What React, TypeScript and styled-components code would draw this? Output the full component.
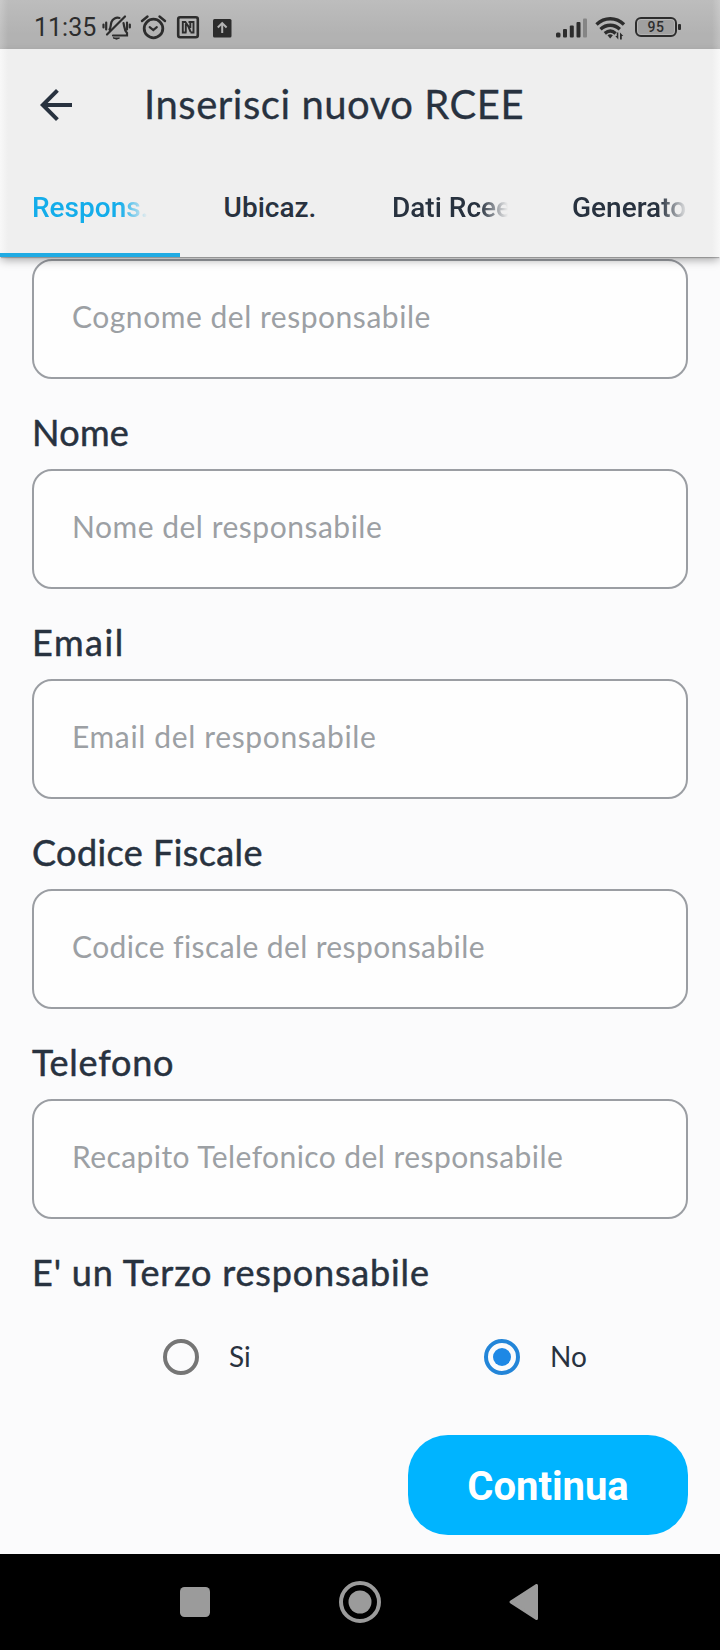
import React from 'react';
import styled, { createGlobalStyle } from 'styled-components';
import { MdArrowBack } from 'react-icons/md';

const GlobalStyle = createGlobalStyle`
  * { box-sizing: border-box; }
  body { margin: 0; background: #fbfbfb; }
`;

const Screen = styled.div`
  width: 720px;
  height: 1650px;
  display: flex;
  flex-direction: column;
  overflow: hidden;
  background: #fbfbfc;
  color: #28323f;
  font-family: Lato, 'Open Sans', sans-serif;
`;

const StatusBar = styled.div`
  height: 49px;
  flex: none;
  display: flex;
  align-items: center;
  justify-content: space-between;
  padding: 5px 38px 0 34px;
  background: linear-gradient(90deg, rgba(255, 255, 255, 0.2), transparent 8px, transparent 712px, rgba(255, 255, 255, 0.2)),
    linear-gradient(#bdbdbd, #b2b2b2 70%);
  color: #2d2d2d;
`;

const StatusGroup = styled.div`
  display: flex;
  align-items: center;
`;

const Clock = styled.span`
  width: 67px;
  padding-top: 1px;
  font: 400 25px/28px Roboto, sans-serif;
`;

const Header = styled.header`
  position: relative;
  z-index: 1;
  height: 208px;
  flex: none;
  display: flex;
  flex-direction: column;
  background: linear-gradient(90deg, #f8f8f8, #efefef 8px, #efefef 712px, #f8f8f8);
  box-shadow: 0 2px 1px -1px rgba(0, 0, 0, 0.22), 0 4px 9px -1px rgba(0, 0, 0, 0.34);
`;

const TitleBar = styled.div`
  height: 112px;
  display: flex;
  align-items: center;
  gap: 64px;
  padding-left: 32px;

  svg { flex: none; }
`;

const Title = styled.h1`
  margin: 0 0 3px;
  font-size: 40px;
  line-height: 48px;
  font-weight: 400;
  letter-spacing: 0.53px;
  white-space: nowrap;
  -webkit-text-stroke: 0.3px currentColor;
`;

const Tabs = styled.nav`
  flex: 1;
  display: grid;
  grid-template-columns: repeat(4, 1fr);
`;

const Tab = styled.div<{ $active?: boolean }>`
  display: flex;
  align-items: center;
  justify-content: center;
  padding: 0 32px;
  border-bottom: 4px solid ${(p) => (p.$active ? '#20abe3' : 'transparent')};
  color: ${(p) => (p.$active ? '#14adea' : '#28323f')};
`;

const TabText = styled.span<{ $faded?: boolean }>`
  ${(p) => p.$faded && 'width: 116px; mask-image: linear-gradient(90deg, #000 88px, transparent 116px);'}
  padding-top: 1px;
  overflow: hidden;
  white-space: nowrap;
  font: 500 28px/36px Roboto, sans-serif;
`;

const Form = styled.main`
  flex: 1;
  display: flex;
  flex-direction: column;
  padding: 2px 32px 0;
`;

const Label = styled.label<{ $tracking: number }>`
  height: 90px;
  flex: none;
  padding-top: 31px;
  font-size: 36px;
  line-height: 44px;
  letter-spacing: ${(p) => p.$tracking}px;
  white-space: nowrap;
  -webkit-text-stroke: 0.5px currentColor;
`;

const Field = styled.div<{ $tracking: number }>`
  height: 120px;
  flex: none;
  display: flex;
  align-items: center;
  padding: 0 38px 7px;
  border: 2px solid #9b9ea3;
  border-radius: 20px;
  background: #fefefe;
  color: #9ca0a4;
  font-size: 30px;
  letter-spacing: ${(p) => p.$tracking}px;
  white-space: nowrap;
`;

const RadioRow = styled.div`
  height: 94px;
  flex: none;
  display: grid;
  grid-template-columns: 321px 1fr;
  padding: 2px 0 0 131px;
`;

const RadioOption = styled.div`
  display: flex;
  align-items: center;
  gap: 30px;
  font-size: 28px;

  span { padding-bottom: 3px; }
`;

const Radio = styled.i<{ $checked?: boolean }>`
  width: 36px;
  height: 36px;
  display: grid;
  place-items: center;
  border: 4px solid ${(p) => (p.$checked ? '#2385d8' : '#757575')};
  border-radius: 50%;

  &::after {
    content: '';
    width: 18px;
    height: 18px;
    border-radius: 50%;
    background: ${(p) => (p.$checked ? '#1e88e5' : 'transparent')};
  }
`;

const SubmitButton = styled.button`
  align-self: flex-end;
  width: 280px;
  height: 100px;
  margin-top: 32px;
  padding: 4px 0 0;
  border: 0;
  border-radius: 40px;
  background: #00b4ff;
  color: #fff;
  font: 700 40px/48px Roboto, sans-serif;
`;

const NavBar = styled.footer`
  height: 96px;
  flex: none;
  display: flex;
  align-items: center;
  justify-content: space-between;
  padding: 0 182px 0 180px;
  background: #000;
`;

const fields = [
  { hint: 'Cognome del responsabile', hintTracking: 0.53 },
  { label: 'Nome', labelTracking: 0.3, hint: 'Nome del responsabile', hintTracking: 0.51 },
  { label: 'Email', labelTracking: 1.6, hint: 'Email del responsabile', hintTracking: 0.64 },
  { label: 'Codice Fiscale', labelTracking: 0.42, hint: 'Codice fiscale del responsabile', hintTracking: 0.39 },
  { label: 'Telefono', labelTracking: 0.75, hint: 'Recapito Telefonico del responsabile', hintTracking: 0.43 },
];

const StatusIcons = () => (
  <svg width="132" height="30" viewBox="101 11 132 30" fill="none" stroke="#2d2d2d" strokeWidth="2.200" strokeLinecap="round">
    <path d="M107 33.500 125 15.500M109.500 28.500c1.500-2 1-5 2-7.500 1-3 4.500-5 8-4M123.500 22c1 4 .5 7 3.500 10v2.500h-14M103.500 23.500v3M106.200 21.500v7M127 21.500v7M129.800 23.500v3" />
    <path d="M113.500 37h6q-3 2.500-6 0Z" fill="#2d2d2d" strokeWidth="1" />
    <circle cx="153.500" cy="27.500" r="9.300" strokeWidth="2.800" />
    <path d="M149.700 26.200l3.600 2.800 3.500-2.800" strokeWidth="2.200" />
    <path d="M142 20l5.500-4.500M165 20l-5.500-4.500" strokeWidth="2.400" />
    <rect x="178.200" y="16.200" width="19.600" height="20" rx="2" strokeWidth="2.600" />
    <path d="M186.500 31.500h-3.700V21h2.500q4 4.500 5.300 10M185.800 23v8.500M188.500 21h5v10.500h-3M190.300 21v6" strokeWidth="1.900" strokeLinecap="butt" />
    <rect x="213" y="18" width="18.500" height="18.500" rx="1.500" fill="#2d2d2d" stroke="none" />
    <path d="M222.200 32V22.500M217.800 26.500l4.400-4.400 4.400 4.400" stroke="#b4b4b4" strokeLinecap="butt" strokeWidth="2" />
  </svg>
);

const SignalIcons = () => (
  <svg width="71" height="26" viewBox="555 13 71 26" fill="#2d2d2d">
    <rect x="556" y="31.500" width="4.500" height="5" rx="1.500" />
    <rect x="563" y="28" width="4" height="8.500" rx="1" />
    <rect x="569.800" y="24.500" width="4" height="12" rx="1" />
    <rect x="576.500" y="21" width="4" height="15.500" rx="1" />
    <rect x="583" y="17.500" width="4" height="19" rx="1" fill="#858585" />
    <g fill="none" stroke="#2d2d2d" strokeWidth="3.400">
      <path d="M596.500 23.500c8-7.600 19.500-7.600 27.500 0" />
      <path d="M600.500 28.200c5.800-5.300 13.800-5.300 19.300 0" />
      <path d="M604.800 32.400c3.500-3 7.500-3 10.800 0" />
    </g>
    <path d="M607.500 34.300q2.700-2 5.400 0l-2.700 3.200Z" />
    <path d="M618.300 31.500v7l-3-3.500h1.500v-3.500ZM620 38.500v-7l3.300 3.500h-1.500v3.500Z" />
  </svg>
);

const Battery = styled.div`
  position: relative;
  width: 42px;
  height: 20px;
  margin-left: 9px;
  margin-right: 5px;
  padding: 1px;
  border: 2px solid #2d2d2d;
  border-radius: 6px;

  &::after {
    content: '';
    position: absolute;
    right: -6px;
    top: 5px;
    width: 3px;
    height: 6px;
    border-radius: 1px;
    background: #2d2d2d;
  }
`;

const BatteryLevel = styled.div`
  height: 14px;
  border-radius: 3px;
  background: #a0a0a0;
  text-align: center;
  font: 500 14px/15px Roboto, sans-serif;
  letter-spacing: 0.6px;
`;

const App = () => (
  <Screen>
    <GlobalStyle />
    <StatusBar>
      <StatusGroup>
        <Clock>11:35</Clock>
        <StatusIcons />
      </StatusGroup>
      <StatusGroup>
        <SignalIcons />
        <Battery>
          <BatteryLevel>95</BatteryLevel>
        </Battery>
      </StatusGroup>
    </StatusBar>
    <Header>
      <TitleBar>
        <MdArrowBack size={48} />
        <Title>Inserisci nuovo RCEE</Title>
      </TitleBar>
      <Tabs>
        <Tab $active><TabText $faded>Respons.</TabText></Tab>
        <Tab><TabText>Ubicaz.</TabText></Tab>
        <Tab><TabText $faded>Dati Rcee</TabText></Tab>
        <Tab><TabText $faded>Generato</TabText></Tab>
      </Tabs>
    </Header>
    <Form>
      {fields.map((f) => (
        <React.Fragment key={f.hint}>
          {f.label && <Label $tracking={f.labelTracking ?? 0}>{f.label}</Label>}
          <Field $tracking={f.hintTracking}>{f.hint}</Field>
        </React.Fragment>
      ))}
      <Label $tracking={0.84}>E' un Terzo responsabile</Label>
      <RadioRow>
        <RadioOption>
          <Radio />
          <span>Si</span>
        </RadioOption>
        <RadioOption>
          <Radio $checked />
          <span>No</span>
        </RadioOption>
      </RadioRow>
      <SubmitButton>Continua</SubmitButton>
    </Form>
    <NavBar>
      <svg width="30" height="30"><rect width="30" height="30" rx="4.500" fill="#9b9b9b" /></svg>
      <svg width="42" height="42">
        <circle cx="21" cy="21" r="19" fill="none" stroke="#9b9b9b" strokeWidth="4" />
        <circle cx="21" cy="21" r="11.500" fill="#9b9b9b" />
      </svg>
      <svg width="29" height="36"><path d="M2 18 27.500 1.500v33Z" fill="#9b9b9b" stroke="#9b9b9b" strokeWidth="3" strokeLinejoin="round" /></svg>
    </NavBar>
  </Screen>
);

export default App;
